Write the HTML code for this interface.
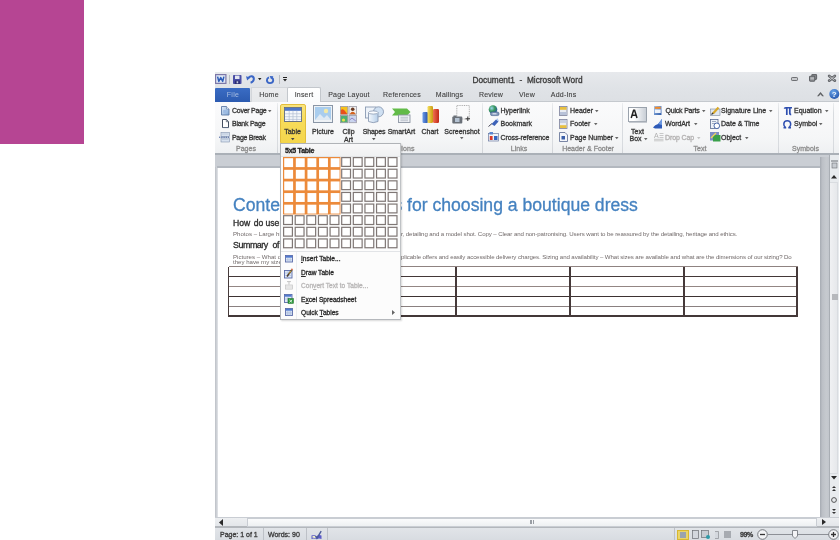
<!DOCTYPE html>
<html><head><meta charset="utf-8"><style>
html,body{margin:0;padding:0}
body{width:840px;height:540px;position:relative;overflow:hidden;background:#fff;font-family:"Liberation Sans",sans-serif}
#root{position:absolute;left:0;top:0;width:840px;height:540px;will-change:transform}
.a{position:absolute}
.t{position:absolute;white-space:nowrap;font-family:"Liberation Sans",sans-serif;-webkit-text-stroke:0.3px currentColor}
svg{position:absolute;overflow:visible}
</style></head><body>
<div id="root"><div class="a" style="left:0px;top:0px;width:84px;height:144px;background:#b64593"></div>
<div class="a" style="left:215px;top:72px;width:624px;height:15px;background:linear-gradient(#e7e9ec,#e0e3e7)"></div>
<div class="a" style="left:215px;top:87px;width:624px;height:14px;background:linear-gradient(#e0e3e7,#dde0e4)"></div>
<div class="a" style="left:215px;top:101px;width:624px;height:53px;background:linear-gradient(#fbfbfc,#f5f6f7 70%,#eef0f2)"></div>
<div class="a" style="left:215px;top:101px;width:624px;height:1px;background:#c5c9ce"></div>
<div class="a" style="left:215px;top:153px;width:624px;height:2px;background:#aab0b7"></div>
<div class="a" style="left:215px;top:155px;width:624px;height:362px;background:#caced4"></div>
<div class="a" style="left:215px;top:167px;width:2.5px;height:350px;background:linear-gradient(90deg,#bcc0c6,#d4d7dc 70%,#e6e8eb)"></div>
<div class="a" style="left:217px;top:166px;width:603px;height:1.5px;background:#b3b8bf"></div>
<div class="a" style="left:217.5px;top:167.5px;width:602.5px;height:349.5px;background:#fff"></div>
<div class="a" style="left:820px;top:157px;width:9px;height:360px;background:linear-gradient(90deg,#a6abb2,#bcc0c6 25%,#c6cacf 70%,#c2c6cc)"></div>
<div class="a" style="left:829px;top:155px;width:10px;height:362px;background:#e8ebee"></div>
<div class="a" style="left:829.3px;top:155px;width:1.1px;height:362px;background:#a9aeb4"></div>
<div class="a" style="left:215px;top:517px;width:624px;height:10px;background:linear-gradient(#eef0f2,#e2e5e9)"></div>
<div class="a" style="left:215px;top:517px;width:624px;height:1px;background:#c9cdd3"></div>
<div class="a" style="left:215px;top:527px;width:624px;height:13px;background:linear-gradient(#e2e5e9,#d8dce1)"></div>
<div class="a" style="left:215px;top:526.3px;width:624px;height:1.4px;background:#b3b7bc"></div>
<svg style="left:215px;top:74px" width="11.5" height="10" viewBox="0 0 11.5 10"><rect x="0.6" y="0.6" width="10.3" height="8.8" fill="#dfe8f6" stroke="#7d78a8" stroke-width="1.2"/><path d="M2.6 2.6L3.8 7.4L5.75 3.6L7.7 7.4L8.9 2.6" stroke="#2e5db8" stroke-width="1.5" fill="none" stroke-linejoin="round"/></svg>
<div class="a" style="left:228.5px;top:74.5px;width:1px;height:9px;background:#b8bcc2"></div>
<svg style="left:233px;top:74.5px" width="8.5" height="9" viewBox="0 0 8.5 9"><rect x="0" y="0" width="8.5" height="9" rx="0.8" fill="#4b4fa6"/><rect x="2" y="0.6" width="4.5" height="3.4" fill="#e2e6f2"/><rect x="1.8" y="5.6" width="5" height="3.4" fill="#2b2d72"/><rect x="3.6" y="6.3" width="1.6" height="2" fill="#c9cfe6"/></svg>
<svg style="left:246px;top:75px" width="9" height="8.5" viewBox="0 0 9 8.5"><path d="M2.2 3.2Q3.5 0.8 5.8 1.2Q8.2 1.8 7.8 4.4Q7.4 6.9 4.6 7.8" stroke="#3a66c6" stroke-width="2" fill="none"/><path d="M0 1.2L4.2 2.6L1.2 5.6Z" fill="#3a66c6"/></svg>
<svg style="left:258.25px;top:77.8px" width="3.5" height="3" viewBox="0 0 3.5 3"><path d="M0 0H3.5L1.75 2.2Z" fill="#222"/></svg>
<svg style="left:266.4px;top:75.5px" width="8" height="7.8" viewBox="0 0 8 7.8"><path d="M5.9 1.6Q7.4 2.7 7.2 4.6Q6.8 7.1 4 7.1Q1 7 0.9 4.3Q0.9 2.1 3 1.3" stroke="#3a66c6" stroke-width="1.9" fill="none"/><path d="M3.6 0L7.4 0.3L5.2 3.6Z" fill="#3a66c6"/></svg>
<div class="a" style="left:279px;top:74.5px;width:1px;height:9px;background:#b8bcc2"></div>
<svg style="left:282.5px;top:77px" width="4" height="4.5" viewBox="0 0 4 4.5"><rect x="0" y="0" width="4" height="1" fill="#222"/><path d="M0 2H4L2 4.5Z" fill="#222"/></svg>
<div class="t" style="left:427.5px;width:200px;text-align:center;top:75.97px;font-size:8.3px;line-height:8.3px;color:#3a3a3a;">Document1 &nbsp;- &nbsp;Microsoft Word</div>
<div class="a" style="left:791.2px;top:77.4px;width:7.3px;height:3.6px;background:#c8cacd;border:1.2px solid #6e7074;box-sizing:border-box;border-radius:1.2px"></div>
<svg style="left:808.8px;top:74.2px" width="8.2" height="7.5" viewBox="0 0 8.2 7.5"><rect x="2.8" y="0.6" width="4.8" height="4.8" rx="0.8" fill="#8a8c90" stroke="#66686c" stroke-width="1.1"/><rect x="0.6" y="2.3" width="5.2" height="4.8" rx="0.8" fill="#a0a2a6" stroke="#5e6064" stroke-width="1.1"/><path d="M1.5 4.2H5" stroke="#d0d2d4" stroke-width="0.7"/></svg>
<svg style="left:827.8px;top:74.6px" width="8" height="6.6" viewBox="0 0 8 6.6"><path d="M1.2 1L6.8 5.6M6.8 1L1.2 5.6" stroke="#66686c" stroke-width="2.8" stroke-linecap="round"/><path d="M1.4 1.2L6.6 5.4M6.6 1.2L1.4 5.4" stroke="#c9cbce" stroke-width="0.9"/></svg>
<div class="a" style="left:250.5px;top:87px;width:37px;height:14.5px;background:linear-gradient(#ebecee,#e6e8ea);border:1px solid #d3d6da;border-bottom:none;box-sizing:border-box"></div>
<div class="a" style="left:215px;top:88px;width:35px;height:13.5px;background:linear-gradient(#3a6cc4,#2c5bb0);border-radius:1px 1px 0 0"></div>
<div class="t" style="left:133px;width:200px;text-align:center;top:91.07px;font-size:7px;line-height:7px;color:#a9bfe2;letter-spacing:0.3px;-webkit-text-stroke:0">File</div>
<div class="a" style="left:287.3px;top:86.8px;width:33.7px;height:14.8px;background:linear-gradient(#ffffff,#fafbfc);border:1px solid #c3c7cc;border-bottom:none;box-sizing:border-box;border-radius:2px 2px 0 0"></div>
<div class="t" style="left:169px;width:200px;text-align:center;top:91.07px;font-size:7px;line-height:7px;color:#404040;letter-spacing:0.2px;-webkit-text-stroke:0.1px #404040">Home</div>
<div class="t" style="left:204px;width:200px;text-align:center;top:91.07px;font-size:7px;line-height:7px;color:#404040;letter-spacing:0.2px;-webkit-text-stroke:0.1px #404040">Insert</div>
<div class="t" style="left:249px;width:200px;text-align:center;top:91.07px;font-size:7px;line-height:7px;color:#404040;letter-spacing:0.2px;-webkit-text-stroke:0.1px #404040">Page Layout</div>
<div class="t" style="left:302px;width:200px;text-align:center;top:91.07px;font-size:7px;line-height:7px;color:#404040;letter-spacing:0.2px;-webkit-text-stroke:0.1px #404040">References</div>
<div class="t" style="left:349.5px;width:200px;text-align:center;top:91.07px;font-size:7px;line-height:7px;color:#404040;letter-spacing:0.2px;-webkit-text-stroke:0.1px #404040">Mailings</div>
<div class="t" style="left:391px;width:200px;text-align:center;top:91.07px;font-size:7px;line-height:7px;color:#404040;letter-spacing:0.2px;-webkit-text-stroke:0.1px #404040">Review</div>
<div class="t" style="left:427px;width:200px;text-align:center;top:91.07px;font-size:7px;line-height:7px;color:#404040;letter-spacing:0.2px;-webkit-text-stroke:0.1px #404040">View</div>
<div class="t" style="left:463.6px;width:200px;text-align:center;top:91.07px;font-size:7px;line-height:7px;color:#404040;letter-spacing:0.2px;-webkit-text-stroke:0.1px #404040">Add-Ins</div>
<svg style="left:817px;top:92.2px" width="7" height="4.2" viewBox="0 0 7 4.2"><path d="M0 4.2L3.5 0L7 4.2H5.2L3.5 2.2L1.8 4.2Z" fill="#5f6164"/></svg>
<svg style="left:828.8px;top:89px" width="10.6" height="10" viewBox="0 0 10.6 10"><defs><radialGradient id="hlp" cx="0.4" cy="0.3" r="0.8"><stop offset="0" stop-color="#6aa6ea"/><stop offset="1" stop-color="#1f4fa8"/></radialGradient></defs><circle cx="5.3" cy="5" r="5" fill="url(#hlp)"/><text x="5.3" y="8.2" font-family="Liberation Sans" font-weight="bold" font-size="8" fill="#f0f4fa" text-anchor="middle">?</text></svg>
<div class="a" style="left:276.5px;top:102.5px;width:1px;height:50.5px;background:linear-gradient(#eceef0,#d8dbdf 20%,#d8dbdf 85%,#d0d3d7)"></div>
<div class="a" style="left:481.5px;top:102.5px;width:1px;height:50.5px;background:linear-gradient(#eceef0,#d8dbdf 20%,#d8dbdf 85%,#d0d3d7)"></div>
<div class="a" style="left:552px;top:102.5px;width:1px;height:50.5px;background:linear-gradient(#eceef0,#d8dbdf 20%,#d8dbdf 85%,#d0d3d7)"></div>
<div class="a" style="left:622px;top:102.5px;width:1px;height:50.5px;background:linear-gradient(#eceef0,#d8dbdf 20%,#d8dbdf 85%,#d0d3d7)"></div>
<div class="a" style="left:778px;top:102.5px;width:1px;height:50.5px;background:linear-gradient(#eceef0,#d8dbdf 20%,#d8dbdf 85%,#d0d3d7)"></div>
<div class="a" style="left:833px;top:102.5px;width:1px;height:50.5px;background:linear-gradient(#eceef0,#d8dbdf 20%,#d8dbdf 85%,#d0d3d7)"></div>
<div class="t" style="left:146px;width:200px;text-align:center;top:145.37px;font-size:7px;line-height:7px;color:#8b8b8b;">Pages</div>
<div class="t" style="left:401.2px;top:145.37px;font-size:7px;line-height:7px;color:#8b8b8b;letter-spacing:0.15px">ions</div>
<div class="t" style="left:419px;width:200px;text-align:center;top:145.37px;font-size:7px;line-height:7px;color:#8b8b8b;">Links</div>
<div class="t" style="left:488px;width:200px;text-align:center;top:145.37px;font-size:7px;line-height:7px;color:#8b8b8b;">Header &amp; Footer</div>
<div class="t" style="left:600px;width:200px;text-align:center;top:145.37px;font-size:7px;line-height:7px;color:#8b8b8b;">Text</div>
<div class="t" style="left:705.5px;width:200px;text-align:center;top:145.37px;font-size:7px;line-height:7px;color:#8b8b8b;">Symbols</div>
<svg style="left:221px;top:105.5px" width="8.5" height="9.5" viewBox="0 0 8.5 9.5"><defs><linearGradient id="cpg" x1="0" x2="1" y1="0" y2="1"><stop offset="0" stop-color="#e4eef9"/><stop offset="1" stop-color="#7fa6d6"/></linearGradient></defs><path d="M0.5 0.5H5.5L8 3V9H0.5Z" fill="url(#cpg)" stroke="#5d7aa6" stroke-width="0.9"/><path d="M5.5 0.5V3H8" fill="#fff" stroke="#5d7aa6" stroke-width="0.6"/><rect x="2.2" y="4" width="3.5" height="3" fill="#9dbbe3"/></svg>
<div class="t" style="left:232px;top:107.07px;font-size:7px;line-height:7px;color:#363636;letter-spacing:-0.25px">Cover Page</div>
<svg style="left:268.25px;top:110.3px" width="3.5" height="3" viewBox="0 0 3.5 3"><path d="M0 0H3.5L1.75 2.2Z" fill="#666"/></svg>
<svg style="left:221.5px;top:119px" width="7" height="9" viewBox="0 0 7 9"><path d="M0.5 0.5H4.3L6.5 2.7V8.5H0.5Z" fill="#fff" stroke="#2f3a4e" stroke-width="0.9"/><path d="M4.3 0.5V2.7H6.5" fill="none" stroke="#2f3a4e" stroke-width="0.6"/><path d="M1 8.6H6.8" stroke="#6a7890" stroke-width="0.8"/></svg>
<div class="t" style="left:232px;top:120.07px;font-size:7px;line-height:7px;color:#363636;letter-spacing:-0.25px">Blank Page</div>
<svg style="left:219px;top:131.5px" width="11" height="10.5" viewBox="0 0 11 10.5"><rect x="2" y="0.5" width="8.5" height="4" fill="#d8e2ef" stroke="#8393ad" stroke-width="0.6"/><rect x="2" y="6" width="8.5" height="4" fill="#d8e2ef" stroke="#8393ad" stroke-width="0.6"/><path d="M0 5.2H11" stroke="#3d5a98" stroke-width="1" stroke-dasharray="1.4 0.8"/><path d="M3 2H9.5M3 7.5H9.5" stroke="#a8b6ca" stroke-width="0.5"/></svg>
<div class="t" style="left:232px;top:134.07px;font-size:7px;line-height:7px;color:#363636;letter-spacing:-0.3px">Page Break</div>
<div class="a" style="left:280px;top:103.5px;width:25.5px;height:40px;background:linear-gradient(#f9e47e,#f7dc5a 40%,#f4d64c);border:1px solid #e2be3c;box-sizing:border-box;border-radius:2px"></div>
<svg style="left:283.5px;top:106.8px" width="18" height="15" viewBox="0 0 18 15"><rect x="0.5" y="0.5" width="17" height="14" fill="#f6f8fb" stroke="#5f6b80" stroke-width="0.9"/><rect x="1" y="1" width="16" height="2.8" fill="#4f78c8"/><path d="M1 6.8H17M1 9.7H17M1 12.4H17M5.2 3.8V14M9 3.8V14M12.8 3.8V14" stroke="#b2bfd3" stroke-width="0.7"/><rect x="0.5" y="14" width="17" height="1" fill="#6a7280"/></svg>
<div class="t" style="left:192.5px;width:200px;text-align:center;top:127.77px;font-size:7px;line-height:7px;color:#363636;">Table</div>
<svg style="left:290.75px;top:137.8px" width="3.5" height="3" viewBox="0 0 3.5 3"><path d="M0 0H3.5L1.75 2.2Z" fill="#444"/></svg>
<svg style="left:313px;top:105px" width="20" height="18" viewBox="0 0 20 18"><rect x="0.5" y="0.5" width="19" height="17" fill="#eef2f6" stroke="#8a96a6"/><rect x="2" y="2" width="16" height="13" fill="#a9cdee"/><circle cx="13" cy="6" r="2.2" fill="#f3e9a6"/><path d="M2 15L7 9L11 13L14 10L18 15Z" fill="#dfe9f3"/></svg>
<div class="t" style="left:223px;width:200px;text-align:center;top:127.77px;font-size:7px;line-height:7px;color:#363636;">Picture</div>
<svg style="left:340px;top:105.5px" width="17" height="17" viewBox="0 0 17 17"><rect x="0.4" y="0.4" width="7.4" height="7.8" fill="#f6c21a" stroke="#9a9aa6" stroke-width="0.8"/><path d="M0.8 4Q3 2 5 5L7.4 8.2H0.8Z" fill="#e8501c"/><rect x="9" y="0.4" width="7.4" height="7.8" fill="#f2f0ee" stroke="#9a9aa6" stroke-width="0.8"/><circle cx="12.7" cy="3.3" r="1.8" fill="#6a3a22"/><path d="M9.6 8.2Q12.7 3.5 15.8 8.2Z" fill="#d4621e"/><rect x="0.4" y="9.5" width="7.4" height="7.2" fill="#4fb070" stroke="#9a9aa6" stroke-width="0.8"/><circle cx="3.5" cy="14" r="1.6" fill="#e8e04a"/><rect x="9" y="9.5" width="7.4" height="7.2" fill="#c9d4ee" stroke="#9a9aa6" stroke-width="0.8"/><path d="M9.6 14L12 12L15.8 15" stroke="#8a7ac0" stroke-width="0.9" fill="none"/></svg>
<div class="t" style="left:248.5px;width:200px;text-align:center;top:127.57px;font-size:7px;line-height:7px;color:#363636;">Clip</div>
<div class="t" style="left:248.5px;width:200px;text-align:center;top:135.77px;font-size:7px;line-height:7px;color:#363636;">Art</div>
<svg style="left:365px;top:105.5px" width="19" height="17.5" viewBox="0 0 19 17.5"><defs><linearGradient id="shg" x1="0" x2="1"><stop offset="0" stop-color="#f4f8fc"/><stop offset="1" stop-color="#b8d0ea"/></linearGradient></defs><rect x="0.5" y="1" width="10.5" height="11" fill="#eef3f9" stroke="#8b9bb3" stroke-width="0.9"/><circle cx="13.5" cy="5.8" r="5" fill="#cfe0f2" stroke="#8b9bb3" stroke-width="0.9"/><path d="M3.5 6.5V15.5Q8.2 17.8 13 15.5V6.5" fill="url(#shg)" stroke="#8b9bb3" stroke-width="0.9"/><ellipse cx="8.25" cy="6.5" rx="4.75" ry="1.6" fill="#fbfdff" stroke="#8b9bb3" stroke-width="0.8"/></svg>
<div class="t" style="left:274px;width:200px;text-align:center;top:127.77px;font-size:7px;line-height:7px;color:#363636;letter-spacing:-0.2px">Shapes</div>
<svg style="left:372.25px;top:137.8px" width="3.5" height="3" viewBox="0 0 3.5 3"><path d="M0 0H3.5L1.75 2.2Z" fill="#555"/></svg>
<svg style="left:392px;top:107.5px" width="19" height="15" viewBox="0 0 19 15"><path d="M0 0.5H15L18.5 4L15 7.5H0L3 4Z" fill="#62bb48"/><rect x="6.5" y="7" width="11.5" height="7.5" fill="#eef1f5" stroke="#8d96a3" stroke-width="0.9"/><path d="M8.5 9.3H16M8.5 11H16M8.5 12.7H16" stroke="#a8b0bb" stroke-width="0.7"/></svg>
<div class="t" style="left:301.5px;width:200px;text-align:center;top:127.77px;font-size:7px;line-height:7px;color:#363636;">SmartArt</div>
<svg style="left:421.5px;top:105.5px" width="18" height="17.5" viewBox="0 0 18 17.5"><defs><linearGradient id="cb1" x1="0" x2="1"><stop offset="0" stop-color="#6a9ae8"/><stop offset="1" stop-color="#2850a8"/></linearGradient><linearGradient id="cb2" x1="0" x2="1"><stop offset="0" stop-color="#f6e060"/><stop offset="1" stop-color="#c89a10"/></linearGradient><linearGradient id="cb3" x1="0" x2="1"><stop offset="0" stop-color="#f07050"/><stop offset="1" stop-color="#c02818"/></linearGradient></defs><rect x="0.5" y="6" width="5.5" height="11" rx="1.2" fill="url(#cb1)"/><rect x="5.5" y="0" width="5.5" height="17" rx="1.2" fill="url(#cb2)"/><rect x="11" y="3" width="6" height="14" rx="1.2" fill="url(#cb3)"/></svg>
<div class="t" style="left:330px;width:200px;text-align:center;top:127.77px;font-size:7px;line-height:7px;color:#363636;">Chart</div>
<svg style="left:452px;top:104.5px" width="19" height="19" viewBox="0 0 19 19"><rect x="4.8" y="0.5" width="12.5" height="13.5" fill="none" stroke="#777" stroke-width="0.6" stroke-dasharray="1 0.8"/><rect x="0.3" y="11.5" width="10" height="7" rx="1" fill="#6a7078"/><rect x="1.5" y="10.5" width="3" height="1.5" fill="#6a7078"/><rect x="3" y="13" width="4.5" height="4" fill="#b4c2d2"/><path d="M15.8 11.5V16M13.5 13.8H18" stroke="#333" stroke-width="1"/></svg>
<div class="t" style="left:362px;width:200px;text-align:center;top:127.77px;font-size:7px;line-height:7px;color:#363636;">Screenshot</div>
<svg style="left:460.25px;top:137.3px" width="3.5" height="3" viewBox="0 0 3.5 3"><path d="M0 0H3.5L1.75 2.2Z" fill="#666"/></svg>
<svg style="left:487.5px;top:104.5px" width="11.5" height="11" viewBox="0 0 11.5 11"><defs><radialGradient id="glb" cx="0.35" cy="0.35" r="0.7"><stop offset="0" stop-color="#9ad3f0"/><stop offset="0.5" stop-color="#3a9a5a"/><stop offset="1" stop-color="#2a5a9a"/></radialGradient></defs><circle cx="5" cy="4.5" r="4.3" fill="url(#glb)"/><rect x="2.5" y="7" width="8.5" height="3.6" rx="1.5" fill="#7f95b8" stroke="#3d5a8a" stroke-width="0.6"/><rect x="4.5" y="8.2" width="4" height="1.2" fill="#dfe7f3"/></svg>
<div class="t" style="left:500.5px;top:107.07px;font-size:7px;line-height:7px;color:#363636;">Hyperlink</div>
<svg style="left:487.5px;top:118px" width="11" height="9" viewBox="0 0 11 9"><path d="M0.5 8.5L4 5.5" stroke="#445" stroke-width="1"/><path d="M3.5 6L8 1.5L10.5 3.5L6.5 8Z" fill="#3d62b8"/><path d="M8 1.5L9.5 0.2L10.8 2.8L10.5 3.5Z" fill="#a8c4ec"/></svg>
<div class="t" style="left:500.5px;top:120.07px;font-size:7px;line-height:7px;color:#363636;">Bookmark</div>
<svg style="left:488px;top:132px" width="11" height="9.5" viewBox="0 0 11 9.5"><rect x="0.5" y="1.5" width="10" height="7.5" fill="#f1f4f9" stroke="#6a7aa0" stroke-width="0.7"/><rect x="1.5" y="0" width="3.5" height="2.5" fill="#5a86d0"/><rect x="1.8" y="4" width="2.8" height="4" fill="#d8392a"/><rect x="6" y="4" width="3.5" height="4" fill="#3566c0"/></svg>
<div class="t" style="left:500.5px;top:134.07px;font-size:7px;line-height:7px;color:#363636;letter-spacing:-0.1px">Cross-reference</div>
<svg style="left:559px;top:105.5px" width="8.5" height="10" viewBox="0 0 8.5 10"><rect x="0.5" y="0.5" width="7.5" height="9" fill="#e9ecf2" stroke="#7b7f9a" stroke-width="0.8"/><rect x="1" y="1" width="6.5" height="2.8" fill="#e8c040"/><rect x="1" y="6" width="6.5" height="3" fill="#b8c2d8"/></svg>
<div class="t" style="left:570px;top:107.07px;font-size:7px;line-height:7px;color:#363636;">Header</div>
<svg style="left:595.25px;top:110.3px" width="3.5" height="3" viewBox="0 0 3.5 3"><path d="M0 0H3.5L1.75 2.2Z" fill="#666"/></svg>
<svg style="left:559px;top:118.5px" width="8.5" height="10" viewBox="0 0 8.5 10"><rect x="0.5" y="0.5" width="7.5" height="9" fill="#e9ecf2" stroke="#7b7f9a" stroke-width="0.8"/><rect x="1" y="1" width="6.5" height="3" fill="#c8d0e0"/><rect x="1" y="6.2" width="6.5" height="2.8" fill="#e8c040"/></svg>
<div class="t" style="left:570px;top:120.07px;font-size:7px;line-height:7px;color:#363636;">Footer</div>
<svg style="left:593.75px;top:123.3px" width="3.5" height="3" viewBox="0 0 3.5 3"><path d="M0 0H3.5L1.75 2.2Z" fill="#666"/></svg>
<svg style="left:559px;top:132px" width="9" height="10" viewBox="0 0 9 10"><path d="M0.5 0.5H6L8.5 3V9.5H0.5Z" fill="#f4f6fa" stroke="#5a6a90" stroke-width="0.8"/><rect x="2.5" y="4" width="3.5" height="3.5" fill="#3b5fa8"/></svg>
<div class="t" style="left:570px;top:134.07px;font-size:7px;line-height:7px;color:#363636;">Page Number</div>
<svg style="left:614.75px;top:137.3px" width="3.5" height="3" viewBox="0 0 3.5 3"><path d="M0 0H3.5L1.75 2.2Z" fill="#666"/></svg>
<svg style="left:628px;top:106.5px" width="19" height="16" viewBox="0 0 19 16"><defs><linearGradient id="tbg" x1="0" x2="1"><stop offset="0.3" stop-color="#fff"/><stop offset="1" stop-color="#c6ccd4"/></linearGradient></defs><rect x="0.5" y="0.5" width="18" height="14" fill="url(#tbg)" stroke="#9aa2ac"/><rect x="1" y="14.6" width="18" height="1.2" fill="#b9bec5"/><path d="M3.2 11L5.6 3.2H6.6L9 11M4.2 8.3H8" stroke="#222" stroke-width="1.5" fill="none"/></svg>
<div class="t" style="left:537.5px;width:200px;text-align:center;top:127.57px;font-size:7px;line-height:7px;color:#363636;">Text</div>
<div class="t" style="left:535.5px;width:200px;text-align:center;top:135.37px;font-size:7px;line-height:7px;color:#363636;">Box</div>
<svg style="left:643.55px;top:137.5px" width="3.5" height="3" viewBox="0 0 3.5 3"><path d="M0 0H3.5L1.75 2.2Z" fill="#666"/></svg>
<svg style="left:654px;top:105.5px" width="7.5" height="9" viewBox="0 0 7.5 9"><defs><linearGradient id="qpg" x1="0" x2="1" y1="0" y2="1"><stop offset="0" stop-color="#a9c8ee"/><stop offset="1" stop-color="#2e5aa8"/></linearGradient></defs><rect x="0" y="0" width="7.5" height="9" fill="url(#qpg)"/><rect x="0.8" y="0.8" width="5.9" height="2" fill="#f08a2a"/><rect x="0.8" y="3.5" width="5.9" height="3.5" fill="#eef3fa"/></svg>
<div class="t" style="left:665.5px;top:107.07px;font-size:7px;line-height:7px;color:#363636;letter-spacing:-0.2px">Quick Parts</div>
<svg style="left:702.25px;top:110.3px" width="3.5" height="3" viewBox="0 0 3.5 3"><path d="M0 0H3.5L1.75 2.2Z" fill="#666"/></svg>
<svg style="left:653px;top:118.5px" width="10" height="9.5" viewBox="0 0 10 9.5"><path d="M0 8.5Q2 5.5 5 5L9 0V9.5H2Z" fill="#2d5ab8"/><path d="M5 5L9 0V6Z" fill="#6d98e0"/></svg>
<div class="t" style="left:665px;top:120.07px;font-size:7px;line-height:7px;color:#363636;letter-spacing:-0.1px">WordArt</div>
<svg style="left:693.75px;top:123.3px" width="3.5" height="3" viewBox="0 0 3.5 3"><path d="M0 0H3.5L1.75 2.2Z" fill="#666"/></svg>
<svg style="left:653.5px;top:132px" width="9.5" height="9" viewBox="0 0 9.5 9"><text x="0" y="6" font-family="Liberation Sans" font-size="7" fill="#b0b0b0">A</text><path d="M5.5 1.5H9.5M5.5 3.5H9.5M5.5 5.5H9.5M0 7.3H9.5M0 8.8H9.5" stroke="#bdbdbd" stroke-width="0.8"/></svg>
<div class="t" style="left:665px;top:134.07px;font-size:7px;line-height:7px;color:#b2b0b0;letter-spacing:-0.1px">Drop Cap</div>
<svg style="left:696.75px;top:137.3px" width="3.5" height="3" viewBox="0 0 3.5 3"><path d="M0 0H3.5L1.75 2.2Z" fill="#c4c4c4"/></svg>
<svg style="left:710px;top:105.5px" width="10" height="10" viewBox="0 0 10 10"><rect x="0.5" y="3" width="9.5" height="6.5" fill="#dfe6ef" stroke="#7b8799" stroke-width="0.6"/><path d="M3 7.5L8.5 1.5" stroke="#d8a828" stroke-width="2.2"/><path d="M1.5 8.5L3.2 6.8" stroke="#333" stroke-width="1.2"/></svg>
<div class="t" style="left:721px;top:107.07px;font-size:7px;line-height:7px;color:#363636;">Signature Line</div>
<svg style="left:769.25px;top:110.3px" width="3.5" height="3" viewBox="0 0 3.5 3"><path d="M0 0H3.5L1.75 2.2Z" fill="#666"/></svg>
<svg style="left:709.5px;top:118.5px" width="10" height="10" viewBox="0 0 10 10"><rect x="0.5" y="0.5" width="7.5" height="9" fill="#eef2f8" stroke="#5a6a90" stroke-width="0.8"/><path d="M2 2.5H6M2 4.5H6" stroke="#6a7a9a" stroke-width="0.6"/><circle cx="6.8" cy="6.8" r="2.8" fill="#fff" stroke="#3a5aa0" stroke-width="0.9"/></svg>
<div class="t" style="left:721px;top:120.07px;font-size:7px;line-height:7px;color:#363636;">Date &amp; Time</div>
<svg style="left:709.5px;top:132px" width="10.5" height="9.5" viewBox="0 0 10.5 9.5"><rect x="0" y="0" width="9" height="8.5" fill="#7d8cc4"/><rect x="3" y="3" width="7.5" height="6.5" fill="#3aa04a"/><path d="M1 6L6 1" stroke="#f3d45a" stroke-width="1.3"/></svg>
<div class="t" style="left:721px;top:134.07px;font-size:7px;line-height:7px;color:#363636;">Object</div>
<svg style="left:744.75px;top:137.3px" width="3.5" height="3" viewBox="0 0 3.5 3"><path d="M0 0H3.5L1.75 2.2Z" fill="#666"/></svg>
<svg style="left:783.5px;top:106.5px" width="8" height="8" viewBox="0 0 8 8"><path d="M0.3 1.6Q1 0.6 2.5 0.8H8" stroke="#2f4fb0" stroke-width="1.6" fill="none"/><path d="M2.8 1V8M5.8 1V6.6Q5.8 7.6 7.2 7.4" stroke="#2f4fb0" stroke-width="1.7" fill="none"/></svg>
<div class="t" style="left:794px;top:107.07px;font-size:7px;line-height:7px;color:#363636;">Equation</div>
<svg style="left:825.25px;top:110.3px" width="3.5" height="3" viewBox="0 0 3.5 3"><path d="M0 0H3.5L1.75 2.2Z" fill="#666"/></svg>
<svg style="left:783px;top:119.5px" width="8.5" height="8.5" viewBox="0 0 8.5 8.5"><path d="M2.6 7.6Q0.6 6 0.8 4Q1 0.8 4.25 0.8Q7.5 0.8 7.7 4Q7.9 6 5.9 7.6" stroke="#2f4fb0" stroke-width="1.5" fill="none"/><path d="M0.5 7.8H3.2M5.3 7.8H8" stroke="#2f4fb0" stroke-width="1.4"/></svg>
<div class="t" style="left:794px;top:120.07px;font-size:7px;line-height:7px;color:#363636;">Symbol</div>
<svg style="left:818.75px;top:123.3px" width="3.5" height="3" viewBox="0 0 3.5 3"><path d="M0 0H3.5L1.75 2.2Z" fill="#666"/></svg>
<div class="t" style="left:233px;top:196.60px;font-size:17.6px;line-height:17.6px;color:#4582c0;letter-spacing:0px">Content requirements for choosing a boutique dress</div>
<div class="t" style="left:233px;top:218.52px;font-size:8.6px;line-height:8.6px;color:#2a2a2a;">How<span style="margin-left:1.2px"> </span>do<span style="margin-left:-0.2px"> </span>users judge quality</div>
<div class="t" style="left:233px;top:231.04px;font-size:6.1px;line-height:6.1px;color:#716a6a;-webkit-text-stroke:0">Photos &#8211; Large high quality images</div>
<div class="t" style="left:401px;top:231.04px;font-size:6.1px;line-height:6.1px;color:#716a6a;letter-spacing:-0.09px;-webkit-text-stroke:0">r, detailing and a model shot. Copy &#8211; Clear and non-patronising. Users want to be reassured by the detailing, heritage and ethics.</div>
<div class="t" style="left:233px;top:240.97px;font-size:8.9px;line-height:8.9px;color:#2a2a2a;letter-spacing:-0.45px;word-spacing:2.6px">Summary of findings</div>
<div class="t" style="left:233px;top:253.64px;font-size:6.1px;line-height:6.1px;color:#716a6a;-webkit-text-stroke:0">Pictures &#8211; What do the products look</div>
<div class="t" style="left:401px;top:253.64px;font-size:6.1px;line-height:6.1px;color:#716a6a;letter-spacing:-0.09px;-webkit-text-stroke:0">plicable offers and easily accessible delivery charges. Sizing and availability &#8211; What sizes are available and what are the dimensions of our sizing? Do</div>
<div class="t" style="left:233px;top:258.84px;font-size:6.1px;line-height:6.1px;color:#716a6a;-webkit-text-stroke:0">they have my size?</div>
<div class="a" style="left:228.5px;top:266.15000000000003px;width:569px;height:1.3px;background:#8f8381"></div>
<div class="a" style="left:228.5px;top:276.125px;width:569px;height:1.35px;background:#433737"></div>
<div class="a" style="left:228.5px;top:286.15000000000003px;width:569px;height:1.3px;background:#938684"></div>
<div class="a" style="left:228.5px;top:296.125px;width:569px;height:1.35px;background:#3d3232"></div>
<div class="a" style="left:228.5px;top:306.2px;width:569px;height:1.0px;background:#8a8080"></div>
<div class="a" style="left:228.5px;top:315.425px;width:569px;height:1.15px;background:#433838"></div>
<div class="a" style="left:228.20000000000002px;top:266.5px;width:1.2px;height:50.3px;background:#463a3a"></div>
<div class="a" style="left:341.4px;top:266.5px;width:1.2px;height:50.3px;background:#463a3a"></div>
<div class="a" style="left:455.4px;top:266.5px;width:1.2px;height:50.3px;background:#463a3a"></div>
<div class="a" style="left:569.4px;top:266.5px;width:1.2px;height:50.3px;background:#463a3a"></div>
<div class="a" style="left:683.4px;top:266.5px;width:1.2px;height:50.3px;background:#463a3a"></div>
<div class="a" style="left:796.4px;top:266.5px;width:1.2px;height:50.3px;background:#463a3a"></div>
<div class="a" style="left:280px;top:143px;width:121px;height:177px;background:#fcfcfc;border:1px solid #b0b3b7;border-right-color:#bfc2c5;border-bottom-color:#b5b8bc;box-sizing:border-box;box-shadow:1px 1px 1.5px rgba(0,0,0,0.15)"></div>
<div class="a" style="left:281px;top:144px;width:119px;height:13px;background:linear-gradient(#f8f8f9,#f0f1f2);border-bottom:1px solid #e2e4e6;box-sizing:border-box"></div>
<div class="t" style="left:285px;top:147.47px;font-size:7px;line-height:7px;color:#222;font-weight:bold;letter-spacing:-0.25px">5x5 Table</div>
<svg style="left:283px;top:157.2px" width="120" height="95" viewBox="0 0 120 95"><rect x="0" y="0" width="57.48" height="57.48" fill="#ec8a3a"/><rect x="1.20" y="1.20" width="8.9" height="8.9" fill="#fff"/><rect x="12.82" y="1.20" width="8.9" height="8.9" fill="#fff"/><rect x="24.44" y="1.20" width="8.9" height="8.9" fill="#fff"/><rect x="36.06" y="1.20" width="8.9" height="8.9" fill="#fff"/><rect x="47.68" y="1.20" width="8.9" height="8.9" fill="#fff"/><rect x="58.70" y="0.60" width="8.8" height="8.8" fill="#fff" stroke="#7f7775" stroke-width="1.2"/><rect x="70.32" y="0.60" width="8.8" height="8.8" fill="#fff" stroke="#7f7775" stroke-width="1.2"/><rect x="81.94" y="0.60" width="8.8" height="8.8" fill="#fff" stroke="#7f7775" stroke-width="1.2"/><rect x="93.56" y="0.60" width="8.8" height="8.8" fill="#fff" stroke="#7f7775" stroke-width="1.2"/><rect x="105.18" y="0.60" width="8.8" height="8.8" fill="#fff" stroke="#7f7775" stroke-width="1.2"/><rect x="1.20" y="12.82" width="8.9" height="8.9" fill="#fff"/><rect x="12.82" y="12.82" width="8.9" height="8.9" fill="#fff"/><rect x="24.44" y="12.82" width="8.9" height="8.9" fill="#fff"/><rect x="36.06" y="12.82" width="8.9" height="8.9" fill="#fff"/><rect x="47.68" y="12.82" width="8.9" height="8.9" fill="#fff"/><rect x="58.70" y="12.22" width="8.8" height="8.8" fill="#fff" stroke="#7f7775" stroke-width="1.2"/><rect x="70.32" y="12.22" width="8.8" height="8.8" fill="#fff" stroke="#7f7775" stroke-width="1.2"/><rect x="81.94" y="12.22" width="8.8" height="8.8" fill="#fff" stroke="#7f7775" stroke-width="1.2"/><rect x="93.56" y="12.22" width="8.8" height="8.8" fill="#fff" stroke="#7f7775" stroke-width="1.2"/><rect x="105.18" y="12.22" width="8.8" height="8.8" fill="#fff" stroke="#7f7775" stroke-width="1.2"/><rect x="1.20" y="24.44" width="8.9" height="8.9" fill="#fff"/><rect x="12.82" y="24.44" width="8.9" height="8.9" fill="#fff"/><rect x="24.44" y="24.44" width="8.9" height="8.9" fill="#fff"/><rect x="36.06" y="24.44" width="8.9" height="8.9" fill="#fff"/><rect x="47.68" y="24.44" width="8.9" height="8.9" fill="#fff"/><rect x="58.70" y="23.84" width="8.8" height="8.8" fill="#fff" stroke="#7f7775" stroke-width="1.2"/><rect x="70.32" y="23.84" width="8.8" height="8.8" fill="#fff" stroke="#7f7775" stroke-width="1.2"/><rect x="81.94" y="23.84" width="8.8" height="8.8" fill="#fff" stroke="#7f7775" stroke-width="1.2"/><rect x="93.56" y="23.84" width="8.8" height="8.8" fill="#fff" stroke="#7f7775" stroke-width="1.2"/><rect x="105.18" y="23.84" width="8.8" height="8.8" fill="#fff" stroke="#7f7775" stroke-width="1.2"/><rect x="1.20" y="36.06" width="8.9" height="8.9" fill="#fff"/><rect x="12.82" y="36.06" width="8.9" height="8.9" fill="#fff"/><rect x="24.44" y="36.06" width="8.9" height="8.9" fill="#fff"/><rect x="36.06" y="36.06" width="8.9" height="8.9" fill="#fff"/><rect x="47.68" y="36.06" width="8.9" height="8.9" fill="#fff"/><rect x="58.70" y="35.46" width="8.8" height="8.8" fill="#fff" stroke="#7f7775" stroke-width="1.2"/><rect x="70.32" y="35.46" width="8.8" height="8.8" fill="#fff" stroke="#7f7775" stroke-width="1.2"/><rect x="81.94" y="35.46" width="8.8" height="8.8" fill="#fff" stroke="#7f7775" stroke-width="1.2"/><rect x="93.56" y="35.46" width="8.8" height="8.8" fill="#fff" stroke="#7f7775" stroke-width="1.2"/><rect x="105.18" y="35.46" width="8.8" height="8.8" fill="#fff" stroke="#7f7775" stroke-width="1.2"/><rect x="1.20" y="47.68" width="8.9" height="8.9" fill="#fff"/><rect x="12.82" y="47.68" width="8.9" height="8.9" fill="#fff"/><rect x="24.44" y="47.68" width="8.9" height="8.9" fill="#fff"/><rect x="36.06" y="47.68" width="8.9" height="8.9" fill="#fff"/><rect x="47.68" y="47.68" width="8.9" height="8.9" fill="#fff"/><rect x="58.70" y="47.08" width="8.8" height="8.8" fill="#fff" stroke="#7f7775" stroke-width="1.2"/><rect x="70.32" y="47.08" width="8.8" height="8.8" fill="#fff" stroke="#7f7775" stroke-width="1.2"/><rect x="81.94" y="47.08" width="8.8" height="8.8" fill="#fff" stroke="#7f7775" stroke-width="1.2"/><rect x="93.56" y="47.08" width="8.8" height="8.8" fill="#fff" stroke="#7f7775" stroke-width="1.2"/><rect x="105.18" y="47.08" width="8.8" height="8.8" fill="#fff" stroke="#7f7775" stroke-width="1.2"/><rect x="0.60" y="58.70" width="8.8" height="8.8" fill="#fff" stroke="#7f7775" stroke-width="1.2"/><rect x="12.22" y="58.70" width="8.8" height="8.8" fill="#fff" stroke="#7f7775" stroke-width="1.2"/><rect x="23.84" y="58.70" width="8.8" height="8.8" fill="#fff" stroke="#7f7775" stroke-width="1.2"/><rect x="35.46" y="58.70" width="8.8" height="8.8" fill="#fff" stroke="#7f7775" stroke-width="1.2"/><rect x="47.08" y="58.70" width="8.8" height="8.8" fill="#fff" stroke="#7f7775" stroke-width="1.2"/><rect x="58.70" y="58.70" width="8.8" height="8.8" fill="#fff" stroke="#7f7775" stroke-width="1.2"/><rect x="70.32" y="58.70" width="8.8" height="8.8" fill="#fff" stroke="#7f7775" stroke-width="1.2"/><rect x="81.94" y="58.70" width="8.8" height="8.8" fill="#fff" stroke="#7f7775" stroke-width="1.2"/><rect x="93.56" y="58.70" width="8.8" height="8.8" fill="#fff" stroke="#7f7775" stroke-width="1.2"/><rect x="105.18" y="58.70" width="8.8" height="8.8" fill="#fff" stroke="#7f7775" stroke-width="1.2"/><rect x="0.60" y="70.32" width="8.8" height="8.8" fill="#fff" stroke="#7f7775" stroke-width="1.2"/><rect x="12.22" y="70.32" width="8.8" height="8.8" fill="#fff" stroke="#7f7775" stroke-width="1.2"/><rect x="23.84" y="70.32" width="8.8" height="8.8" fill="#fff" stroke="#7f7775" stroke-width="1.2"/><rect x="35.46" y="70.32" width="8.8" height="8.8" fill="#fff" stroke="#7f7775" stroke-width="1.2"/><rect x="47.08" y="70.32" width="8.8" height="8.8" fill="#fff" stroke="#7f7775" stroke-width="1.2"/><rect x="58.70" y="70.32" width="8.8" height="8.8" fill="#fff" stroke="#7f7775" stroke-width="1.2"/><rect x="70.32" y="70.32" width="8.8" height="8.8" fill="#fff" stroke="#7f7775" stroke-width="1.2"/><rect x="81.94" y="70.32" width="8.8" height="8.8" fill="#fff" stroke="#7f7775" stroke-width="1.2"/><rect x="93.56" y="70.32" width="8.8" height="8.8" fill="#fff" stroke="#7f7775" stroke-width="1.2"/><rect x="105.18" y="70.32" width="8.8" height="8.8" fill="#fff" stroke="#7f7775" stroke-width="1.2"/><rect x="0.60" y="81.94" width="8.8" height="8.8" fill="#fff" stroke="#7f7775" stroke-width="1.2"/><rect x="12.22" y="81.94" width="8.8" height="8.8" fill="#fff" stroke="#7f7775" stroke-width="1.2"/><rect x="23.84" y="81.94" width="8.8" height="8.8" fill="#fff" stroke="#7f7775" stroke-width="1.2"/><rect x="35.46" y="81.94" width="8.8" height="8.8" fill="#fff" stroke="#7f7775" stroke-width="1.2"/><rect x="47.08" y="81.94" width="8.8" height="8.8" fill="#fff" stroke="#7f7775" stroke-width="1.2"/><rect x="58.70" y="81.94" width="8.8" height="8.8" fill="#fff" stroke="#7f7775" stroke-width="1.2"/><rect x="70.32" y="81.94" width="8.8" height="8.8" fill="#fff" stroke="#7f7775" stroke-width="1.2"/><rect x="81.94" y="81.94" width="8.8" height="8.8" fill="#fff" stroke="#7f7775" stroke-width="1.2"/><rect x="93.56" y="81.94" width="8.8" height="8.8" fill="#fff" stroke="#7f7775" stroke-width="1.2"/><rect x="105.18" y="81.94" width="8.8" height="8.8" fill="#fff" stroke="#7f7775" stroke-width="1.2"/></svg>
<div class="a" style="left:281px;top:251px;width:119px;height:1px;background:#e2e4e7"></div>
<div class="a" style="left:295.5px;top:252px;width:1px;height:67px;background:#eceef0"></div>
<svg style="left:284.5px;top:254.8px" width="8" height="7.5" viewBox="0 0 8 7.5"><rect x="0.5" y="0.5" width="7" height="6.5" fill="#dfe8f6" stroke="#5a6aa8" stroke-width="0.9"/><rect x="0.9" y="0.9" width="6.2" height="1.8" fill="#4f7ad0"/><path d="M2.83 2.7V7.0" stroke="#9fb3d8" stroke-width="0.6"/><path d="M5.17 2.7V7.0" stroke="#9fb3d8" stroke-width="0.6"/><path d="M0.9 4.85H7.1" stroke="#9fb3d8" stroke-width="0.6"/></svg>
<div class="t" style="left:301px;top:256.21px;font-size:6.6px;line-height:6.6px;color:#2a2a2a;"><u>I</u>nsert Table...</div>
<svg style="left:284px;top:267.5px" width="9" height="10.5" viewBox="0 0 9 10.5"><rect x="0.5" y="2.5" width="7.5" height="7.5" fill="#dfe8f6" stroke="#5a6aa8" stroke-width="0.9"/><path d="M1 5H7.5M1 7.5H7.5M4 3V9.5" stroke="#9fb3d8" stroke-width="0.6"/><path d="M3 8.5L8.2 1.2" stroke="#4a3a2a" stroke-width="1.5"/><path d="M7.6 2L8.5 0.8" stroke="#e88060" stroke-width="1.6"/><path d="M5 5.7L7.2 2.6" stroke="#e8c040" stroke-width="0.8"/></svg>
<div class="t" style="left:301px;top:269.91px;font-size:6.6px;line-height:6.6px;color:#2a2a2a;"><u>D</u>raw Table</div>
<svg style="left:284.5px;top:281px" width="8" height="8.6" viewBox="0 0 8 8.6"><path d="M2 0.6H6M4 0.6V3.6" stroke="#bdbdbd" stroke-width="0.9"/><rect x="0.5" y="4" width="7" height="4.1" fill="#eeeeee" stroke="#c2c2c2" stroke-width="0.7"/><path d="M0.5 6H7.5" stroke="#cfcfcf" stroke-width="0.5"/></svg>
<div class="t" style="left:301px;top:283.41px;font-size:6.6px;line-height:6.6px;color:#b8b6b6;">Con<u>v</u>ert Text to Table...</div>
<svg style="left:284px;top:294px" width="9.5" height="9.5" viewBox="0 0 9.5 9.5"><rect x="0.5" y="0.5" width="7.5" height="8" fill="#dfe8f6" stroke="#5a6aa8" stroke-width="0.9"/><rect x="0.9" y="0.9" width="6.7" height="1.8" fill="#4f7ad0"/><path d="M1 5H7.5M4 2.7V8.5" stroke="#9fb3d8" stroke-width="0.6"/><rect x="4" y="4.5" width="5.5" height="5" fill="#2c9a3c" stroke="#1e6a2a" stroke-width="0.5"/><path d="M5.4 5.9L8.1 8.4M8.1 5.9L5.4 8.4" stroke="#fff" stroke-width="0.8"/></svg>
<div class="t" style="left:301px;top:296.61px;font-size:6.6px;line-height:6.6px;color:#2a2a2a;">E<u>x</u>cel Spreadsheet</div>
<svg style="left:284.5px;top:307.5px" width="8" height="8" viewBox="0 0 8 8"><rect x="0.5" y="0.5" width="7" height="7" fill="#dfe8f6" stroke="#5a6aa8" stroke-width="0.9"/><rect x="0.9" y="0.9" width="6.2" height="1.8" fill="#4f7ad0"/><path d="M2.83 2.7V7.5" stroke="#9fb3d8" stroke-width="0.6"/><path d="M5.17 2.7V7.5" stroke="#9fb3d8" stroke-width="0.6"/><path d="M0.9 4.30H7.1" stroke="#9fb3d8" stroke-width="0.6"/><path d="M0.9 5.90H7.1" stroke="#9fb3d8" stroke-width="0.6"/></svg>
<div class="t" style="left:301px;top:309.81px;font-size:6.6px;line-height:6.6px;color:#2a2a2a;">Quick <u>T</u>ables</div>
<svg style="left:392px;top:310px" width="3" height="5" viewBox="0 0 3 5"><path d="M0 0L3 2.5L0 5Z" fill="#666"/></svg>
<svg style="left:831px;top:160px" width="7" height="8" viewBox="0 0 7 8"><path d="M0 1H7" stroke="#6b6e74" stroke-width="1"/><rect x="1" y="3" width="5" height="5" fill="#c7cbd1" stroke="#6b6e74" stroke-width="0.6"/></svg>
<svg style="left:831px;top:175px" width="6" height="4" viewBox="0 0 6 4"><path d="M0 3.5L3 0L6 3.5Z" fill="#2a2a2a"/></svg>
<div class="a" style="left:830.4px;top:182px;width:8.1px;height:292px;background:linear-gradient(90deg,#f0f1f3,#e6e8eb);border:1px solid #d9dce0;border-left:none;box-sizing:border-box"></div>
<div class="a" style="left:832px;top:294px;width:5.5px;height:6px;background:#b6b8bc"></div>
<svg style="left:831px;top:476px" width="6" height="4" viewBox="0 0 6 4"><path d="M0 0L3 3.5L6 0Z" fill="#2a2a2a"/></svg>
<svg style="left:832px;top:486px" width="4" height="5" viewBox="0 0 4 5"><path d="M0 2L2 0L4 2Z M0 5L2 3L4 5Z" fill="#333"/></svg>
<svg style="left:831px;top:497px" width="6" height="6" viewBox="0 0 6 6"><circle cx="3" cy="3" r="2.4" fill="none" stroke="#444" stroke-width="0.9"/></svg>
<svg style="left:832px;top:509px" width="4" height="5" viewBox="0 0 4 5"><path d="M0 0L2 2L4 0Z M0 3L2 5L4 3Z" fill="#333"/></svg>
<svg style="left:219px;top:519px" width="4" height="7" viewBox="0 0 4 7"><path d="M4 0L0 3.5L4 7Z" fill="#2a2a2a"/></svg>
<div class="a" style="left:247px;top:518px;width:570px;height:8.5px;background:linear-gradient(#fafbfc,#eef0f2);border:1px solid #c9cdd3;box-sizing:border-box"></div>
<div class="a" style="left:529.5px;top:519.8px;width:0.8px;height:3.8px;background:#9a9ea4"></div>
<div class="a" style="left:531.3px;top:519.8px;width:0.8px;height:3.8px;background:#9a9ea4"></div>
<div class="a" style="left:533.1px;top:519.8px;width:0.8px;height:3.8px;background:#9a9ea4"></div>
<svg style="left:822px;top:518.5px" width="4" height="6" viewBox="0 0 4 6"><path d="M0 0L4 3L0 6Z" fill="#2a2a2a"/></svg>
<div class="t" style="left:220px;top:530.87px;font-size:7px;line-height:7px;color:#3a3a3a;">Page: 1 of 1</div>
<div class="a" style="left:263px;top:528px;width:1px;height:12px;background:#bdc1c7"></div>
<div class="t" style="left:268px;top:530.87px;font-size:7px;line-height:7px;color:#3a3a3a;">Words: 90</div>
<div class="a" style="left:305.8px;top:528px;width:1px;height:12px;background:#bdc1c7"></div>
<svg style="left:311px;top:529.5px" width="11.5" height="9.5" viewBox="0 0 11.5 9.5"><path d="M0.5 5.5Q3 4.2 5.5 6.2Q8 4.2 10.5 5.5V9Q8 7.8 5.5 9.3Q3 7.8 0.5 9Z" fill="#5a5ac8"/><path d="M1.5 6Q3.3 5.2 5.2 6.6V8.4Q3.3 7.3 1.5 7.8Z" fill="#f2f4c8"/><path d="M4.3 6.2L6 8L10.2 1.2" stroke="#4a5a9a" stroke-width="1.4" fill="none"/></svg>
<div class="a" style="left:327px;top:528px;width:1px;height:12px;background:#bdc1c7"></div>
<div class="a" style="left:674px;top:528px;width:1px;height:12px;background:#bdc1c7"></div>
<div class="a" style="left:677px;top:529.5px;width:12px;height:10px;background:#e9d46a;border:1px solid #d8b830;box-sizing:border-box"></div>
<div class="a" style="left:680px;top:531.5px;width:6px;height:6px;background:#9aa3ad"></div>
<svg style="left:692px;top:530px" width="7" height="9" viewBox="0 0 7 9"><rect x="0.5" y="0.5" width="6" height="8" fill="#d4d8de" stroke="#6b6e74" stroke-width="0.7"/></svg>
<svg style="left:701px;top:530px" width="9" height="9" viewBox="0 0 9 9"><rect x="0.5" y="0.5" width="7" height="7" fill="#c8ccd2" stroke="#6b6e74" stroke-width="0.7"/><circle cx="7" cy="7" r="2" fill="#2f9aa8"/></svg>
<svg style="left:713px;top:531px" width="6" height="8" viewBox="0 0 6 8"><path d="M2 0.5H5.5V7.5H2" fill="#d4d8de" stroke="#8b8e94" stroke-width="0.7"/></svg>
<div class="a" style="left:724px;top:531px;width:6.5px;height:7px;background:#a7abb1"></div>
<div class="t" style="left:740px;top:531.07px;font-size:7px;line-height:7px;color:#3a3a3a;font-weight:bold;letter-spacing:-0.4px">99%</div>
<svg style="left:757px;top:529px" width="11" height="11" viewBox="0 0 11 11"><circle cx="5.5" cy="5.5" r="4.8" fill="#f2f3f5" stroke="#6b6e74" stroke-width="0.9"/><path d="M3 5.5H8" stroke="#333" stroke-width="1.3"/></svg>
<div class="a" style="left:768px;top:534px;width:61px;height:1px;background:#8d9096"></div>
<svg style="left:792px;top:530px" width="6" height="9" viewBox="0 0 6 9"><path d="M0.5 0.5H5.5V6L3 8.5L0.5 6Z" fill="#f4f4f6" stroke="#6b6e74" stroke-width="0.8"/></svg>
<svg style="left:828px;top:529px" width="11" height="11" viewBox="0 0 11 11"><circle cx="5.5" cy="5.5" r="4.8" fill="#f2f3f5" stroke="#6b6e74" stroke-width="0.9"/><path d="M3 5.5H8M5.5 3V8" stroke="#333" stroke-width="1.3"/></svg></div>
</body></html>
